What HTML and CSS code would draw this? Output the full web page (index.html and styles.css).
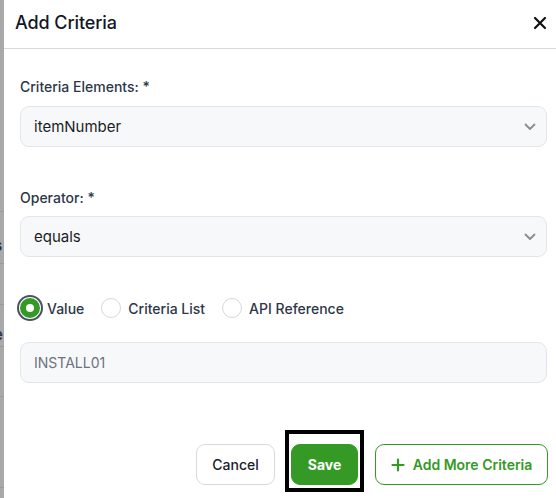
FILE: index.html
```html
<!DOCTYPE html>
<html>
<head>
<meta charset="utf-8">
<link rel="stylesheet" href="styles.css">
</head>
<body>
<div class="backdrop">
  <div class="bg-row r1"></div>
  <div class="bg-row r2"><span class="frag dark">s</span></div>
  <div class="bg-row r3"><span class="frag light">r</span></div>
  <div class="bg-row r4"><span class="frag dark">e</span></div>
  <div class="bg-row r5"><span class="frag blue">r</span></div>
  <div class="bg-row r6"></div>
  <div class="bg-row r7"></div>
</div>
<div class="modal">
  <div class="modal-header">
    <h2 class="title">Add Criteria</h2>
    <svg class="close" width="14" height="14" viewBox="0 0 14 14"><path d="M2 2L12 12M12 2L2 12" stroke="#111" stroke-width="2.2" stroke-linecap="round"/></svg>
  </div>
  <div class="modal-body">
    <div class="field">
      <label class="label">Criteria Elements: *</label>
      <div class="select"><span>itemNumber</span>
        <svg class="chev" width="12" height="8" viewBox="0 0 12 8"><path d="M1.5 1.5L6 6L10.5 1.5" fill="none" stroke="#8c8c8c" stroke-width="1.8" stroke-linecap="round" stroke-linejoin="round"/></svg>
      </div>
    </div>
    <div class="field f2">
      <label class="label">Operator: *</label>
      <div class="select"><span>equals</span>
        <svg class="chev" width="12" height="8" viewBox="0 0 12 8"><path d="M1.5 1.5L6 6L10.5 1.5" fill="none" stroke="#8c8c8c" stroke-width="1.8" stroke-linecap="round" stroke-linejoin="round"/></svg>
      </div>
    </div>
    <div class="radios">
      <div class="radio-item"><span class="radio checked"></span><span class="rlabel">Value</span></div>
      <div class="radio-item"><span class="radio"></span><span class="rlabel">Criteria List</span></div>
      <div class="radio-item"><span class="radio"></span><span class="rlabel">API Reference</span></div>
    </div>
    <div class="input"><span>INSTALL01</span></div>
  </div>
  <div class="footer">
    <button class="btn cancel">Cancel</button>
    <button class="btn save">Save</button>
    <button class="btn add"><svg width="14" height="14" viewBox="0 0 14 14"><path d="M7 1.5V12.5M1.5 7H12.5" stroke="#349a25" stroke-width="2.2" stroke-linecap="round"/></svg>Add More Criteria</button>
  </div>
  <div class="highlight"></div>
</div>
</body>
</html>
```
FILE: styles.css
```css
html, body {
  margin: 0;
  padding: 0;
}
body {
  width: 556px;
  height: 498px;
  overflow: hidden;
  display: flex;
  font-family: Inter, "Liberation Sans", sans-serif;
  background: #fff;
}
.backdrop {
  width: 4px;
  flex: none;
  background: #a9a9a9;
  overflow: hidden;
  display: flex;
  flex-direction: column;
}
.bg-row {
  border-bottom: 1px solid #9a9a9a;
  position: relative;
  flex: none;
}
.r1 { height: 211px; }
.r2 { height: 51px; }
.r3 { height: 40px; }
.r4 { height: 41px; }
.r5 { height: 49px; }
.r6 { height: 90px; }
.r7 { height: 40px; border-bottom: none; }
.frag {
  display: block;
  font-size: 15px;
  line-height: 16px;
  margin-left: -6px;
  font-weight: 600;
}
.r2 .frag { margin-top: 26px; }
.r3 .frag { margin-top: 14px; }
.r4 .frag { margin-top: 22px; }
.r5 .frag { margin-top: 20px; }
.dark { color: #2a3444; }
.light { color: #c4c4c4; }
.blue { color: #1f3f6e; }

.modal {
  flex: 1;
  background: #fff;
  position: relative;
  display: flex;
  flex-direction: column;
}
.modal-header {
  height: 49px;
  border-bottom: 1px solid #d9d9d9;
  display: flex;
  align-items: center;
  justify-content: space-between;
  padding: 0 9px 0 11px;
  box-sizing: border-box;
}
.title {
  margin: 0;
  font-size: 18px;
  font-weight: 500;
  color: #111827;
  letter-spacing: -0.1px;
  margin-top: -3px;
}
.close {
  margin-top: -3px;
}
.modal-body {
  padding: 28px 9px 0 16px;
  display: flex;
  flex-direction: column;
}
.field {
  display: flex;
  flex-direction: column;
}
.f2 { margin-top: 41px; }
.label {
  font-size: 14px;
  font-weight: 500;
  color: #2d3748;
  line-height: 20px;
  margin-bottom: 9px;
}
.f2 .label { margin-bottom: 8px; }
.select, .input {
  height: 41px;
  box-sizing: border-box;
  background: #f7f8fa;
  border: 1px solid #e3e5ea;
  border-radius: 9px;
  display: flex;
  align-items: center;
  justify-content: space-between;
  padding: 0 10px 0 13px;
  font-size: 15px;
  color: #1a1d24;
}
.chev { margin-top: 1px; }
.radios {
  display: flex;
  align-items: center;
  gap: 17px;
  margin-top: 38px;
  height: 26px;
}
.radio-item {
  display: flex;
  align-items: center;
  gap: 7px;
}
.radio {
  width: 20px;
  height: 20px;
  box-sizing: border-box;
  border: 1px solid #d3d7de;
  border-radius: 50%;
  background: #fff;
}
.radio.checked {
  border: 6px solid #349a25;
  box-shadow: 0 0 0 1px #fff, 0 0 0 3px #4a5160;
}
.rlabel {
  font-size: 14px;
  font-weight: 500;
  color: #2d3748;
}
.input {
  margin-top: 21px;
  font-size: 14px;
  color: #6b7280;
}
.footer {
  margin-top: auto;
  margin-bottom: 13px;
  display: flex;
  justify-content: flex-end;
  gap: 16px;
  padding-right: 8px;
}
.btn {
  height: 41px;
  box-sizing: border-box;
  border-radius: 9px;
  font-family: Inter, "Liberation Sans", sans-serif;
  font-size: 14px;
  font-weight: 500;
  display: flex;
  align-items: center;
  justify-content: center;
  gap: 8px;
  padding: 0;
}
.cancel {
  width: 79px;
  background: #fff;
  border: 1px solid #d6dae1;
  color: #1a202c;
}
.save {
  width: 67px;
  background: #349a25;
  border: 1px solid #349a25;
  color: #fff;
  font-weight: 700;
}
.add {
  width: 173px;
  margin-left: 1px;
  background: #fff;
  border: 1px solid #349a25;
  color: #349a25;
  font-weight: 600;
}
.highlight {
  position: absolute;
  left: 281px;
  top: 430px;
  width: 79px;
  height: 62px;
  box-sizing: border-box;
  border: 4px solid #000;
  pointer-events: none;
}
```
